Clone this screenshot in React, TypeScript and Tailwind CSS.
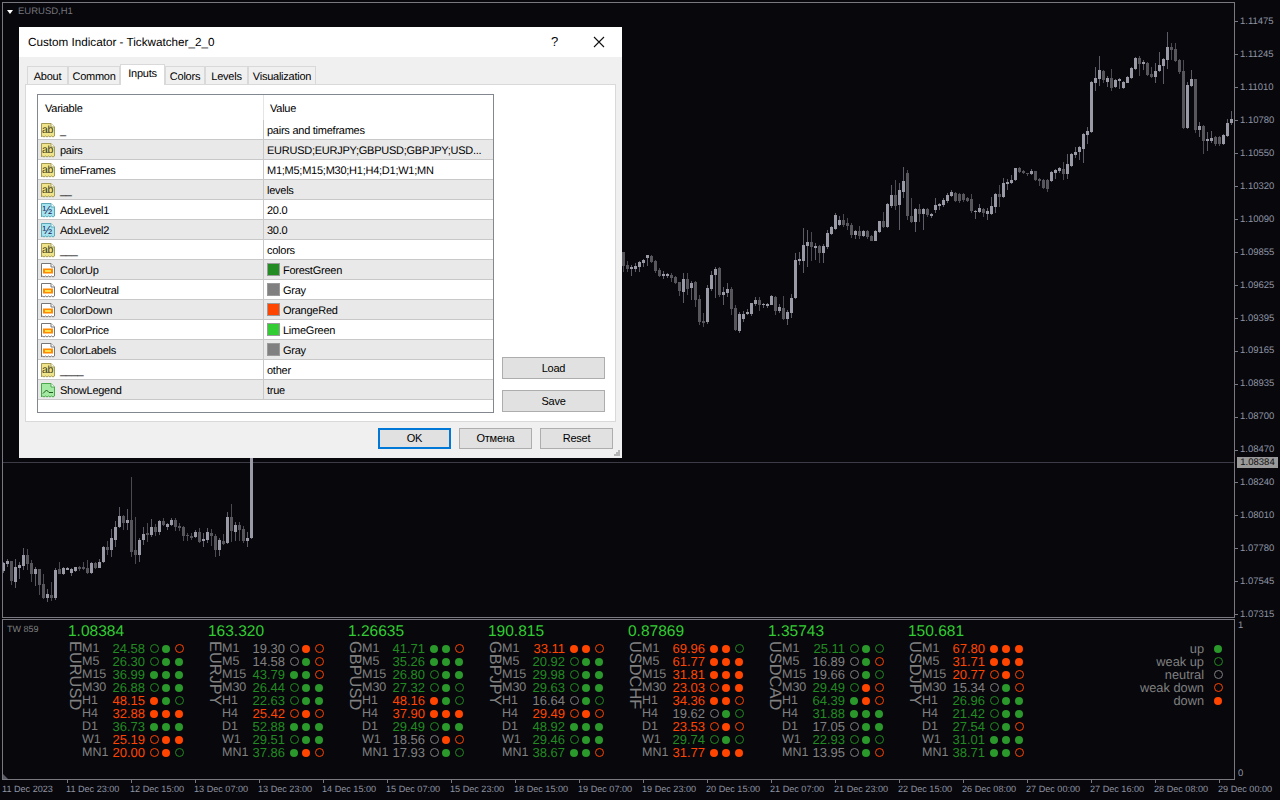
import React from 'react';

type Candle = [number, number, number, number, number, number];

// traced candles: [x, bodyTop, bodyBottom, wickTop, wickBottom, light?] in crop coords (3x)
const lowerLeft: Candle[] = [
  [10,325,347,320,355,1],[22,318,327,312,335,1],[34,318,378,318,390,0],[46,337,380,312,398,1],[58,330,338,322,372,1],[70,300,332,280,345,1],
  [82,300,328,282,345,0],[94,324,357,316,380,0],[106,343,357,335,392,1],[118,343,390,343,420,0],[130,388,430,358,432,0],[142,418,430,402,440,1],
  [154,420,430,380,438,0],[166,345,430,338,435,1],[178,343,357,320,358,0],[190,339,357,336,360,1],[202,339,344,336,346,1],[214,343,354,340,362,1],
  [226,337,348,335,350,1],[238,337,341,333,348,0],[250,337,342,320,345,0],[262,340,354,316,357,0],[274,324,354,320,357,1],[286,324,340,320,342,0],
  [298,321,339,312,340,1],[310,276,321,274,323,1],[322,277,284,258,300,0],[334,250,285,222,305,1],[346,216,255,198,275,1],[358,183,216,156,218,1],
  [370,183,205,180,224,0],[382,195,205,162,225,1],[394,195,291,66,305,0],[406,285,300,186,328,0],[418,255,300,250,320,1],[430,237,255,216,270,1],
  [442,235,240,205,262,0],[454,216,240,193,245,1],[466,215,231,208,242,0],[478,198,232,196,240,1],[490,198,210,188,212,0],[502,207,216,205,225,1],
  [514,195,210,190,213,1],[526,196,215,190,228,0],[538,213,219,205,228,0],[550,216,243,212,258,0],[562,240,242,234,258,0],[574,243,249,234,256,0],
  [586,232,247,225,250,1],[598,232,261,220,265,0],[610,251,258,235,275,1],[622,232,255,220,263,1],[634,235,243,222,272,0],[646,242,285,238,305,0],
  [658,255,285,250,303,1],[670,258,267,238,270,0],[682,186,265,170,267,1],[694,186,228,148,262,0],[706,210,231,202,258,1],[718,210,225,202,257,0],
  [730,222,258,213,263,0],[742,250,258,230,275,1],[754,-10,250,-10,252,1],
];

const middle: Candle[] = [
  [10,215,258,215,275,0],[22,255,267,243,275,0],[34,261,267,255,288,1],[46,258,267,250,275,1],[58,246,261,242,275,1],[70,240,248,238,260,1],
  [82,225,234,224,258,1],[94,228,246,226,250,0],[106,243,273,240,278,0],[118,270,288,264,292,0],[130,282,288,272,297,1],[142,282,288,278,295,1],
  [154,285,294,278,305,0],[166,291,309,288,312,0],[178,306,333,305,348,0],[190,297,336,280,368,1],[202,297,327,280,345,0],[214,309,324,302,360,1],
  [226,306,360,304,382,0],[238,357,425,345,435,0],[250,423,429,400,440,0],[262,324,426,315,432,1],[274,285,327,272,332,1],[286,267,285,262,355,1],
  [298,264,346,262,350,0],[310,336,345,322,375,1],[322,327,339,310,350,1],[334,327,387,322,405,0],[346,384,450,375,452,0],[358,402,453,395,458,1],
  [370,402,417,392,425,1],[382,396,402,388,405,1],[394,369,402,368,408,1],[406,360,372,352,378,1],[418,360,375,350,392,0],[430,372,375,368,385,1],
  [442,372,378,368,384,1],[454,348,375,345,376,1],[466,350,393,348,405,0],[478,381,393,372,400,1],[490,384,417,348,420,0],[502,396,417,390,435,1],
  [514,354,399,342,415,1],[526,240,354,220,358,1],[538,237,243,215,255,1],[550,195,243,143,280,1],[562,186,198,150,262,1],[574,186,201,155,243,0],
  [586,198,204,190,240,1],[598,198,219,195,250,0],[610,198,219,192,250,1],[622,159,201,150,208,1],[634,141,162,138,165,1],[646,105,147,100,150,1],
  [658,120,135,108,138,1],[670,120,135,102,140,0],[682,129,138,115,150,0],[694,135,165,130,175,0],[706,153,165,150,177,1],[718,153,168,138,178,0],
  [730,153,168,150,172,1],[742,153,171,150,178,0],[754,168,183,165,184,0],[766,153,183,150,184,1],[778,123,156,122,160,1],[790,123,141,95,145,0],
  [802,72,141,68,145,1],[814,45,78,15,85,1],[826,45,78,0,90,0],[838,30,75,10,150,1],[850,3,36,-40,55,1],[862,-20,108,-30,120,0],
  [874,108,126,55,128,0],[886,87,126,85,155,1],[898,87,102,72,125,0],[910,87,102,85,150,1],[922,87,105,85,110,0],[934,102,108,100,115,1],
  [946,75,90,55,100,1],[958,72,78,68,90,1],[970,60,75,55,80,1],[982,45,63,40,68,1],
];

const right: Candle[] = [
  [4,516,528,510,530,1],[16,519,543,516,546,0],[28,521,543,518,548,0],[40,521,540,518,545,0],[52,533,543,530,546,0],[64,537,573,522,578,0],
  [76,572,575,570,597,1],[88,564,576,552,580,1],[100,566,580,563,592,0],[112,573,582,565,600,1],[124,558,582,532,585,1],[136,522,561,518,580,1],
  [148,522,531,495,560,0],[160,489,531,475,534,1],[172,486,492,476,510,1],[184,480,489,465,492,1],[196,445,480,443,482,1],[208,445,456,440,458,0],
  [220,453,459,450,462,0],[232,459,462,458,468,0],[244,453,462,448,464,1],[256,453,480,453,482,0],[268,477,483,473,498,0],[280,480,504,478,506,0],
  [292,480,507,478,516,0],[304,456,483,454,485,1],[316,450,459,446,478,1],[328,444,453,440,458,1],[340,447,462,425,480,0],[352,432,462,402,478,1],
  [364,402,438,398,440,1],[376,396,405,380,415,1],[388,381,396,378,420,1],[400,342,387,340,430,1],[412,333,345,320,372,1],[424,186,336,184,340,1],
  [436,174,189,140,212,1],[448,150,177,108,198,1],[460,153,180,150,190,0],[472,174,186,168,200,1],[484,174,204,147,213,0],[496,180,201,178,204,1],
  [508,177,183,174,206,1],[520,186,204,184,208,1],[532,171,189,168,190,1],[544,144,174,142,176,1],[556,114,147,112,150,1],[568,114,132,108,168,0],
  [580,126,132,120,150,1],[592,129,165,125,167,0],[604,162,171,140,175,0],[616,153,171,130,188,1],[628,135,153,96,155,1],[640,117,138,115,192,1],
  [652,81,120,36,148,1],[664,81,90,68,120,0],[676,87,123,70,125,0],[688,120,156,118,162,0],[700,153,324,120,327,0],[712,195,324,186,327,1],
  [724,177,198,150,200,1],[736,177,330,176,340,0],[748,318,330,305,352,1],[760,318,363,316,402,0],[772,356,363,335,392,1],[784,354,363,333,370,1],
  [796,351,372,348,378,0],[808,351,372,348,378,0],[820,345,372,343,375,1],[832,309,348,297,352,1],[844,297,309,273,315,1],
];

function Candles({ data, ox, oy }: { data: Candle[]; ox: number; oy: number }) {
  return (
    <>
      {data.map(([z, t, b, wt, wb, up]) => {
        const x = Math.round(ox + z / 3);
        const bt = Math.round(oy + t / 3);
        const bb = Math.round(oy + b / 3);
        const wTop = Math.round(oy + wt / 3);
        const wBot = Math.round(oy + wb / 3);
        return (
          <g key={z}>
            <rect x={x} y={wTop} width={1} height={wBot - wTop} fill={up ? '#5c5c66' : '#4a4a50'} />
            <rect x={x - 1} y={bt} width={3} height={Math.max(bb - bt, 1)} fill={up ? '#9a9aa6' : '#56565c'} />
          </g>
        );
      })}
    </>
  );
}

const prices = ['1.11475','1.11245','1.11010','1.10780','1.10550','1.10320','1.10090','1.09855','1.09625','1.09395','1.09165','1.08935','1.08700','1.08470','1.08240','1.08010','1.07780','1.07545','1.07315'];

const times = ['11 Dec 2023','11 Dec 23:00','12 Dec 15:00','13 Dec 07:00','13 Dec 23:00','14 Dec 15:00','15 Dec 07:00','15 Dec 23:00','18 Dec 15:00','19 Dec 07:00','19 Dec 23:00','20 Dec 15:00','21 Dec 07:00','21 Dec 23:00','22 Dec 15:00','26 Dec 08:00','27 Dec 00:00','27 Dec 16:00','28 Dec 08:00','29 Dec 00:00'];

const frames = ['M1','M5','M15','M30','H1','H4','D1','W1','MN1'];

// each row: value, value colour (g/n/r), three signal dots
const pairs: { name: string; price: string; rows: string[] }[] = [
  { name: 'EURUSD', price: '1.08384', rows: ['24.58 g uUd','26.30 g uUU','36.99 g UUU','26.88 g uUU','48.15 r DUu','32.88 r DDD','36.73 g UUU','25.19 r dDD','20.00 r dDu'] },
  { name: 'EURJPY', price: '163.320', rows: ['19.30 n nDd','14.58 n nUd','43.79 g UUd','26.44 g uUU','22.63 g uUU','25.42 r dDd','52.88 g UUU','29.51 g uUU','37.86 g UDd'] },
  { name: 'GBPUSD', price: '1.26635', rows: ['41.71 g UUd','35.26 g UUU','26.80 g uUU','27.32 g uUu','48.16 r DUu','37.90 r DDD','29.49 g uUU','18.56 n nDd','17.93 n nUu'] },
  { name: 'GBPJPY', price: '190.815', rows: ['33.11 r DDd','20.92 g uUU','29.98 g uUU','29.63 g uUU','16.64 n nUu','29.49 r dDd','48.92 g UUU','29.46 g uUU','38.67 g UUd'] },
  { name: 'USDCHF', price: '0.87869', rows: ['69.96 r DDu','61.77 r DDD','31.81 r DDD','23.03 r dDD','34.36 r DDd','19.62 n nUu','23.53 r dDd','29.74 g uUu','31.77 r DDD'] },
  { name: 'USDCAD', price: '1.35743', rows: ['25.11 g uUu','16.89 n nUd','19.66 n nUu','29.49 g uDd','64.39 g UDd','31.88 g UUU','17.05 n nUU','22.93 g uUu','13.95 n nUd'] },
  { name: 'USDJPY', price: '150.681', rows: ['67.80 r DDD','31.71 r DDD','20.77 r dDd','15.34 n nUd','26.96 g uUU','21.42 g uUU','27.54 g uUd','31.01 g UUU','38.71 g UUd'] },
];

function Dot({ s }: { s: string }) {
  if (s === 'U') return <span className="block w-[8px] h-[8px] rounded-full bg-[#2a982a]" />;
  if (s === 'D') return <span className="block w-[8px] h-[8px] rounded-full bg-[#ff4500]" />;
  if (s === 'u') return <span className="block w-[9px] h-[9px] rounded-full border border-[#228b22]" />;
  if (s === 'd') return <span className="block w-[9px] h-[9px] rounded-full border border-[#ff4500]" />;
  return <span className="block w-[9px] h-[9px] rounded-full border border-[#808080]" />;
}

function PairBlock({ pair }: { pair: (typeof pairs)[number] }) {
  return (
    <div className="w-[140px] shrink-0">
      <div className="h-[22px] text-[15.5px] leading-[24px] pl-[1px] text-[#32cd32]">{pair.price}</div>
      <div className="flex">
        <div className="w-[15px] h-[72px] -mt-[1px] shrink-0 text-[16.4px] leading-[14px] text-[#808080] [writing-mode:vertical-rl] [font-kerning:none]">{pair.name}</div>
        <div className="flex flex-col">
          {pair.rows.map((row, i) => {
            const [value, tone, dots] = row.split(' ');
            return (
              <div key={frames[i]} className="flex items-center h-[13px] text-[13px] leading-[13px]">
                <span className="w-[29px] text-[12.5px] text-[#808080]">{frames[i]}</span>
                {tone === 'g' && <span className="w-[34px] text-right text-[#228b22]">{value}</span>}
                {tone === 'r' && <span className="w-[34px] text-right text-[#ff4500]">{value}</span>}
                {tone === 'n' && <span className="w-[34px] text-right text-[#808080]">{value}</span>}
                <span className="w-[3px]" />
                <span className="w-[12px] flex justify-center"><Dot s={dots[0]} /></span>
                <span className="w-[12px] flex justify-center"><Dot s={dots[1]} /></span>
                <span className="w-[14px] flex justify-center"><Dot s={dots[2]} /></span>
              </div>
            );
          })}
        </div>
      </div>
    </div>
  );
}

const docPath = 'M1.5 1.5H11L14.5 5V14L13 15 11.5 14 10 15 8.5 14 7 15 5.5 14 4 15 2.5 14 1.5 15Z';

function RowIcon({ kind }: { kind: string }) {
  if (kind === 'ab')
    return (
      <svg width="16" height="16" viewBox="0 0 16 16" className="shrink-0">
        <path d={docPath} fill="#f0e48a" stroke="#a39a55" />
        <path d="M11 1.5V5H14.5" fill="#fff" stroke="#a39a55" />
        <text x="2" y="11" fontSize="10.5" fontFamily="Liberation Sans" fill="#3a3a20">ab</text>
      </svg>
    );
  if (kind === 'half')
    return (
      <svg width="16" height="16" viewBox="0 0 16 16" className="shrink-0">
        <path d={docPath} fill="#a5e3ee" stroke="#5ba7b5" />
        <path d="M11 1.5V5H14.5" fill="#fff" stroke="#5ba7b5" />
        <text x="2.5" y="11.5" fontSize="11.5" fontFamily="Liberation Sans" fill="#225">½</text>
      </svg>
    );
  if (kind === 'color')
    return (
      <svg width="16" height="16" viewBox="0 0 16 16" className="shrink-0">
        <path d={docPath} fill="#fff" stroke="#777" />
        <path d="M11 1.5V5H14.5" fill="#fff" stroke="#777" />
        <rect x="3" y="6.5" width="10" height="5" fill="#ff8a00" />
        <rect x="5" y="8" width="6" height="2" fill="#ffe24a" />
      </svg>
    );
  return (
    <svg width="16" height="16" viewBox="0 0 16 16" className="shrink-0">
      <path d={docPath} fill="#a4eaa4" stroke="#4aa84a" />
      <path d="M11 1.5V5H14.5" fill="#fff" stroke="#4aa84a" />
      <path d="M3 11.5 6.5 8 9 10.5H13" fill="none" stroke="#1e5a1e" />
    </svg>
  );
}

const inputs: { name: string; value: string; kind: string; swatch?: string }[] = [
  { name: '_', value: 'pairs and timeframes', kind: 'ab' },
  { name: 'pairs', value: 'EURUSD;EURJPY;GBPUSD;GBPJPY;USD...', kind: 'ab' },
  { name: 'timeFrames', value: 'M1;M5;M15;M30;H1;H4;D1;W1;MN', kind: 'ab' },
  { name: '__', value: 'levels', kind: 'ab' },
  { name: 'AdxLevel1', value: '20.0', kind: 'half' },
  { name: 'AdxLevel2', value: '30.0', kind: 'half' },
  { name: '___', value: 'colors', kind: 'ab' },
  { name: 'ColorUp', value: 'ForestGreen', kind: 'color', swatch: 'bg-[#228b22]' },
  { name: 'ColorNeutral', value: 'Gray', kind: 'color', swatch: 'bg-[#808080]' },
  { name: 'ColorDown', value: 'OrangeRed', kind: 'color', swatch: 'bg-[#ff4500]' },
  { name: 'ColorPrice', value: 'LimeGreen', kind: 'color', swatch: 'bg-[#32cd32]' },
  { name: 'ColorLabels', value: 'Gray', kind: 'color', swatch: 'bg-[#808080]' },
  { name: '____', value: 'other', kind: 'ab' },
  { name: 'ShowLegend', value: 'true', kind: 'bool' },
];

function Dialog() {
  const tabs = [
    ['About', 'w-[41px]'],
    ['Common', 'w-[52px]'],
    ['Inputs', 'w-[45px]'],
    ['Colors', 'w-[40px]'],
    ['Levels', 'w-[43px]'],
    ['Visualization', 'w-[68px]'],
  ];
  return (
    <div className="absolute left-[19px] top-[27px] w-[603px] h-[431px] bg-[#f0f0f0] flex flex-col text-black text-[11px] tracking-[-0.25px]">
      <div className="h-[30px] bg-white flex items-center pl-[9px] shrink-0">
        <span className="flex-1 text-[11.7px] tracking-normal pt-[2px]">Custom Indicator - Tickwatcher_2_0</span>
        <span className="text-[13px] mr-[35px]">?</span>
        <svg width="12" height="12" viewBox="0 0 12 12" className="mr-[17px]">
          <path d="M1 1 11 11M11 1 1 11" stroke="#111" strokeWidth="1.1" fill="none" />
        </svg>
      </div>
      <div className="flex h-[27px] items-end pl-[8px] shrink-0">
        {tabs.map(([t, w]) =>
          t === 'Inputs' ? (
            <div key={t} className={`${w} relative z-10 -mb-[1px] h-[21px] pb-[2px] bg-white border border-b-0 border-[#d9d9d9] flex items-center justify-center`}>{t}</div>
          ) : (
            <div key={t} className={`${w} h-[18px] pt-[3px] bg-[#f0f0f0] border border-b-0 border-[#d9d9d9] flex items-center justify-center`}>{t}</div>
          ),
        )}
      </div>
      <div className="ml-[6px] w-[591px] h-[338px] bg-white border border-[#d9d9d9] flex pl-[11px] pt-[9px] shrink-0">
        <div className="w-[457px] h-[319px] border border-[#828790] shrink-0">
          <div className="flex h-[25px] items-center">
            <div className="w-[226px] pl-[7px] pt-[3px] h-full flex items-center border-r border-[#e5e5e5]">Variable</div>
            <div className="pl-[6px] pt-[3px]">Value</div>
          </div>
          {inputs.map((row, i) => (
            <div key={row.name} className={i % 2 === 1 ? 'flex h-[20px] border-b border-[#c8c8c8] bg-[#e9e9e9]' : 'flex h-[20px] border-b border-[#c8c8c8] bg-white'}>
              <div className="w-[226px] pl-[2px] flex items-center gap-[4px] border-r border-[#c8c8c8]">
                <RowIcon kind={row.kind} />
                <span className="whitespace-nowrap pt-[3px]">{row.name}</span>
              </div>
              <div className="pl-[3px] flex items-center whitespace-nowrap">
                {row.swatch && <span className={`${row.swatch} w-[13px] h-[13px] border border-[#9a9a9a] mr-[3px]`} />}
                <span className="pt-[3px]">{row.value}</span>
              </div>
            </div>
          ))}
        </div>
        <div className="ml-[8px] w-[103px] flex flex-col gap-[11px] pt-[263px]">
          <button className="h-[22px] bg-[#e1e1e1] border border-[#adadad]">Load</button>
          <button className="h-[22px] bg-[#e1e1e1] border border-[#adadad]">Save</button>
        </div>
      </div>
      <div className="flex justify-end gap-[8px] pr-[9px] pt-[6px]">
        <button className="w-[73px] h-[21px] bg-[#e1e1e1] border-2 border-[#0078d7]">OK</button>
        <button className="w-[73px] h-[21px] bg-[#e1e1e1] border border-[#adadad]">Отмена</button>
        <button className="w-[73px] h-[21px] bg-[#e1e1e1] border border-[#adadad]">Reset</button>
      </div>
      <svg width="8" height="8" viewBox="0 0 8 8" className="absolute right-[1px] bottom-[1px]">
        <path d="M5 1h2v2H5zM3 3h2v2H3zM5 3h2v2H5zM1 5h2v2H1zM3 5h2v2H3zM5 5h2v2H5z" fill="#b5b5b5" />
      </svg>
    </div>
  );
}

export default function App() {
  return (
    <div className="relative w-[1280px] h-[800px] overflow-hidden bg-[#07070c] pl-[2px] pt-[2px] [font-family:Liberation_Sans,sans-serif] [text-rendering:geometricPrecision]">
      {/* main chart */}
      <div className="flex h-[616px]">
        <div className="relative w-[1233px] shrink-0 border-t border-b border-l border-r border-[#787880]">
          <svg width="1231" height="614" viewBox="3 3 1231 614" className="block">
            <rect x="3" y="462" width="1231" height="1" fill="#3c3c46" />
            <Candles data={lowerLeft} ox={0} oy={455} />
            <Candles data={middle} ox={620} oy={180} />
            <Candles data={right} ox={950} oy={20} />
          </svg>
          <div className="absolute left-[4px] top-[3px] flex items-center gap-[5px] text-[9.5px] leading-[12px] text-[#75757d]">
            <span className="w-0 h-0 border-l-[3.5px] border-r-[3.5px] border-t-[4px] border-l-transparent border-r-transparent border-t-white" />
            EURUSD,H1
          </div>
        </div>
        <div className="relative flex-1 flex flex-col pt-[3.4px] text-[9.5px] text-[#8f94a3]">
          {prices.map((p) => (
            <div key={p} className="h-[32.95px] shrink-0 flex items-center leading-none">
              <span className="w-[3px] h-px bg-[#787880] mr-[2px]" />
              {p}
            </div>
          ))}
          <div className="absolute left-[2px] top-[455px] w-[41px] h-[11px] bg-[#9a9a9a] text-[#111] flex items-center justify-center leading-none">1.08384</div>
        </div>
      </div>

      {/* indicator panel */}
      <div className="flex mt-[1px] h-[161px]">
        <div className="relative w-[1233px] shrink-0 flex border border-[#787880] text-[#808080]">
          <div className="w-[64px] shrink-0 pl-[4px] pt-[3px] text-[9px] leading-[12px]">TW 859</div>
          {pairs.map((p) => (
            <PairBlock key={p.name} pair={p} />
          ))}
          <div className="flex-1 flex flex-col items-end pt-[22px] pr-[11px] text-[12.8px] leading-[13px]">
            {[
              ['up', 'U'],
              ['weak up', 'u'],
              ['neutral', 'n'],
              ['weak down', 'd'],
              ['down', 'D'],
            ].map(([label, s]) => (
              <div key={label} className="h-[13px] flex items-center whitespace-nowrap">
                {label}
                <span className="w-[10px] ml-[9px] flex justify-center"><Dot s={s} /></span>
              </div>
            ))}
          </div>
          <svg width="5" height="5" viewBox="0 0 5 5" className="absolute left-0 bottom-0">
            <path d="M0 0 5 5H0Z" fill="#5a5a66" />
          </svg>
        </div>
        <div className="flex-1 flex flex-col justify-between pl-[3px] pt-[1px] text-[9.5px] leading-[12px] text-[#8f94a3]">
          <span>1</span>
          <span>0</span>
        </div>
      </div>

      {/* time axis */}
      <div className="flex -ml-[1px] text-[9.1px] leading-[12px] text-[#8f94a3]">
        {times.map((t, i) => (
          <div key={t} className="w-[64px] shrink-0 whitespace-nowrap">
            {i > 0 ? <div className="w-px h-[3px] bg-[#787880] ml-[2px]" /> : <div className="h-[3px]" />}
            <div className="pl-[1px]">{t}</div>
          </div>
        ))}
      </div>

      <Dialog />
    </div>
  );
}
